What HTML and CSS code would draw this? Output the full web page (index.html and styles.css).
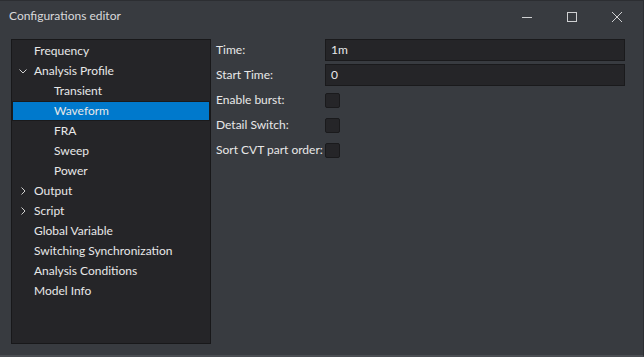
FILE: index.html
```html
<!DOCTYPE html>
<html lang="en">
<head>
  <meta charset="UTF-8">
  <title>Configurations editor</title>
  <link rel="stylesheet" href="styles.css">
</head>
<body>
  <div class="window">
    <div class="titlebar">
      <span class="title">Configurations editor</span>
      <div class="controls">
        <span class="ctl">
          <svg width="12" height="12" viewBox="0 0 12 12"><path d="M1 6.5H11" stroke="#cfd0d2" stroke-width="1"/></svg>
        </span>
        <span class="ctl">
          <svg width="12" height="12" viewBox="0 0 12 12"><rect x="1.5" y="1.5" width="9" height="9" fill="none" stroke="#cfd0d2" stroke-width="1"/></svg>
        </span>
        <span class="ctl">
          <svg width="12" height="12" viewBox="0 0 12 12"><path d="M1 1L11 11M11 1L1 11" stroke="#cfd0d2" stroke-width="1"/></svg>
        </span>
      </div>
    </div>

    <div class="body">
      <div class="tree">
        <div class="row"><span class="arrow"></span>Frequency</div>
        <div class="row"><span class="arrow">
          <svg width="8" height="8" viewBox="0 0 8 8"><path d="M0.5 2.5L4 6L7.5 2.5" fill="none" stroke="#d0d0d0"/></svg>
        </span>Analysis Profile</div>
        <div class="row child">Transient</div>
        <div class="row child selected">Waveform</div>
        <div class="row child">FRA</div>
        <div class="row child">Sweep</div>
        <div class="row child">Power</div>
        <div class="row"><span class="arrow">
          <svg width="8" height="8" viewBox="0 0 8 8"><path d="M2.5 0.5L6 4L2.5 7.5" fill="none" stroke="#d0d0d0"/></svg>
        </span>Output</div>
        <div class="row"><span class="arrow">
          <svg width="8" height="8" viewBox="0 0 8 8"><path d="M2.5 0.5L6 4L2.5 7.5" fill="none" stroke="#d0d0d0"/></svg>
        </span>Script</div>
        <div class="row"><span class="arrow"></span>Global Variable</div>
        <div class="row"><span class="arrow"></span>Switching Synchronization</div>
        <div class="row"><span class="arrow"></span>Analysis Conditions</div>
        <div class="row"><span class="arrow"></span>Model Info</div>
      </div>

      <div class="form">
        <div class="field">
          <label>Time:</label>
          <div class="input">1m</div>
        </div>
        <div class="field">
          <label>Start Time:</label>
          <div class="input">0</div>
        </div>
        <div class="field">
          <label>Enable burst:</label>
          <div class="check"></div>
        </div>
        <div class="field">
          <label>Detail Switch:</label>
          <div class="check"></div>
        </div>
        <div class="field">
          <label>Sort CVT part order:</label>
          <div class="check"></div>
        </div>
      </div>
    </div>
  </div>
</body>
</html>
```

FILE: styles.css
```css
body {
  margin: 0;
  font-family: Lato, "Noto Sans", sans-serif;
  font-size: 12px;
  color: #e8e8e8;
  background-color: #2b2d31;
}

.window {
  width: 644px;
  height: 357px;
  box-sizing: border-box;
  background-color: #383b40;
  border-top: 1px solid #2c2e32;
  border-right: 1px solid #2c2e32;
  border-bottom: 2px solid #4a4d52;
  display: flex;
  flex-direction: column;
}

.titlebar {
  height: 30px;
  display: flex;
  align-items: center;
  justify-content: space-between;
  padding-left: 9px;
  flex-shrink: 0;
}

.title {
  color: #d8d9db;
  margin-top: -1px;
}

.controls {
  display: flex;
  height: 100%;
  margin-right: 4px;
}

.ctl {
  width: 45px;
  display: flex;
  align-items: center;
  justify-content: center;
  margin-top: 1px;
}

.body {
  display: flex;
  padding: 8px 18px 11px 11px;
  flex: 1;
  min-height: 0;
}

/* Tree panel */
.tree {
  width: 200px;
  box-sizing: border-box;
  background-color: #252528;
  border: 1px solid #18181a;
  padding-top: 1px;
  flex-shrink: 0;
}

.row {
  height: 20px;
  box-sizing: border-box;
  padding-bottom: 2px;
  display: flex;
  align-items: center;
  padding-left: 5px;
  white-space: nowrap;
}

.row.child {
  padding-left: 42px;
}

.row.selected {
  background-color: #0079cc;
  border: 1px solid #1a1a1c;
  padding-left: 41px;
  padding-bottom: 1px;
}

.arrow {
  width: 11px;
  margin-right: 6px;
  display: flex;
  justify-content: center;
  align-items: center;
  padding-top: 1px;
}

/* Form panel */
.form {
  flex: 1;
  padding-left: 5px;
  display: flex;
  flex-direction: column;
  gap: 3px;
}

.field {
  display: flex;
  align-items: center;
  height: 22px;
}

.field label {
  width: 109px;
  flex-shrink: 0;
  white-space: nowrap;
  padding-bottom: 1px;
}

.input {
  flex: 1;
  height: 22px;
  box-sizing: border-box;
  background-color: #252528;
  border: 1px solid #1a1a1c;
  padding-left: 5px;
  padding-bottom: 1px;
  display: flex;
  align-items: center;
}

.check {
  width: 13px;
  height: 13px;
  background-color: #252528;
  border: 1px solid #1a1a1c;
  border-radius: 2px;
}
```
